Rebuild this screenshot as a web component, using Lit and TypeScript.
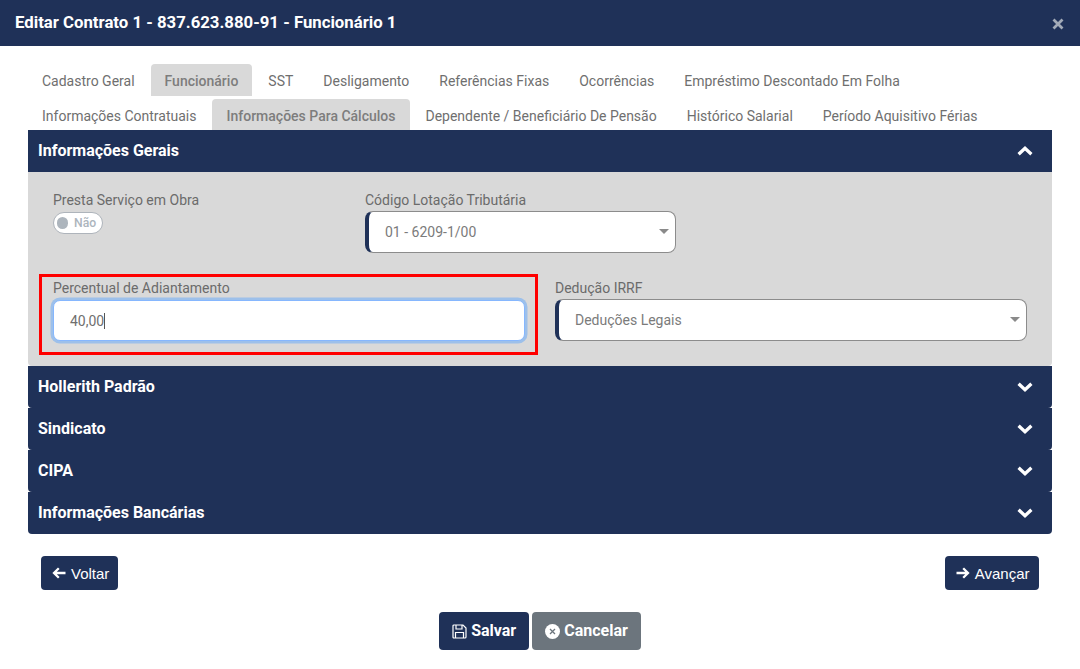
import { LitElement, html, css } from "lit";
import { customElement } from "lit/decorators.js";

const chevron = (up: boolean) => html`<svg class="chev" width="16" height="12" viewBox="0 0 16 12"><path d=${up ? "M1.6 9.2 L8 3.2 L14.4 9.2" : "M1.6 2.8 L8 8.8 L14.4 2.8"} fill="none" stroke="#fff" stroke-width="3.3"/></svg>`;

@customElement("app-root")
export class AppRoot extends LitElement {
  static styles = css`
    :host { display: block; width: 1080px; height: 669px; background: #fff; overflow: hidden; font-family: Roboto, "Liberation Sans", sans-serif; color: #6c757d; }
    * { box-sizing: border-box; }
    .modal-head { height: 46px; background: #1f3158; color: #fff; display: flex; align-items: center; justify-content: space-between; padding: 0 16px 2px 15px; font-size: 16.75px; font-weight: 700; }
    .close { display: flex; margin-top: 3px; }
    .body { padding: 18px 28px 0; }
    .tabs { display: flex; height: 32px; align-items: stretch; }
    .tabs.second { height: 31px; margin-top: 3px; }
    .tab { padding: 2px 14px 0; margin-right: 2px; font-size: 14px; color: #6f6f6f; display: flex; align-items: center; white-space: nowrap; border-radius: 4px 4px 0 0; }
    .tab.active { background: #d9d9d9; font-weight: 500; color: #7d7d7d; }
    .tabs.second .tab.active { margin: 0 1px 0 -1px; padding: 2px 15px 0; }
    .acc-h { height: 42px; background: #1f3158; color: #fff; font-size: 16px; font-weight: 700; display: flex; align-items: center; justify-content: space-between; padding: 0 19px 1px 10px; border-radius: 0 0 4px 4px; }
    .acc-h.first { border-radius: 0; }
    .chev { display: block; }
    .acc-b { height: 194px; background: #d9d9d9; padding: 19px 25px 0 12px; border-radius: 0 0 4px 4px; }
    .row { display: flex; }
    .row.one { height: 61px; padding-left: 13px; }
    .row.two { margin-top: 22px; }
    .f1 { width: 312px; }
    .f2 { width: 311px; }
    label { display: block; font-size: 14px; line-height: 19px; color: #6b6b6b; white-space: nowrap; }
    .toggle { width: 50px; height: 22px; border: 1px solid #aeb4bb; border-radius: 11px; background: #fff; display: flex; align-items: center; padding-left: 1.5px; gap: 6px; font-size: 12.2px; font-weight: 500; color: #adb5bd; margin-top: 2px; }
    .toggle i { width: 11.5px; height: 11.5px; margin-left: 1px; border-radius: 50%; background: #adb5bd; display: block; }
    .select { height: 42px; background: #fff; border: 1px solid #8c8c8c; border-left: 4px solid #1f3158; border-radius: 8px; display: flex; align-items: center; justify-content: space-between; padding: 0 6px 0 16px; font-size: 14px; color: #7b7b7b; margin-top: 1px; }
    .arrow { width: 0; height: 0; margin-top: -1px; border-left: 5.5px solid transparent; border-right: 5.5px solid transparent; border-top: 5.5px solid #8a8a8a; }
    .box { width: 499px; height: 81px; margin-left: -1px; border: 3px solid #f00; padding: 2px 10px 0 11px; }
    .input { height: 41px; margin-top: 2px; background: #fff; border: 1px solid #86b7fe; box-shadow: 0 0 0 2.5px #9dc0ea; border-radius: 7px; display: flex; align-items: center; padding-left: 16px; font-size: 14px; color: #6f6f6f; }
    .caret { width: 1px; height: 16px; background: #555; display: block; }
    .f3 { width: 472px; margin-left: 17px; margin-top: 5px; }
    .pager { display: flex; justify-content: space-between; padding: 22px 13px 0; }
    button { font-family: inherit; border: 0; background: #1f3158; color: #fff; border-radius: 4px; display: flex; align-items: center; margin: 0; }
    .nav { height: 34px; font-family: "Liberation Sans", Arial, sans-serif; font-size: 15px; padding: 0 8.5px 0 11px; gap: 5px; }
    .nav.fwd { padding-right: 9.5px; }
    .actions { display: flex; justify-content: center; gap: 3px; padding-top: 22px; }
    .act { height: 38px; font-size: 16px; font-weight: 700; gap: 4px; padding: 0 13px 2px; }
    .act.sec { background: #6c757d; }
    .act svg { margin-top: 3px; }
  `;
  render() {
    return html`
      <div class="modal-head">
        <span>Editar Contrato 1 - 837.623.880-91 - Funcionário 1</span>
        <span class="close"><svg width="12" height="12" viewBox="0 0 12 12"><path d="M1.5 1.5 L10.5 10.5 M10.5 1.5 L1.5 10.5" stroke="#a3abb8" stroke-width="2.8"/></svg></span>
      </div>
      <div class="body">
        <div class="tabs">
          ${["Cadastro Geral", "Funcionário", "SST", "Desligamento", "Referências Fixas", "Ocorrências", "Empréstimo Descontado Em Folha"].map((t) => html`<div class="tab ${t === "Funcionário" ? "active" : ""}">${t}</div>`)}
        </div>
        <div class="tabs second">
          ${["Informações Contratuais", "Informações Para Cálculos", "Dependente / Beneficiário De Pensão", "Histórico Salarial", "Período Aquisitivo Férias"].map((t) => html`<div class="tab ${t === "Informações Para Cálculos" ? "active" : ""}">${t}</div>`)}
        </div>
        <div class="acc-h first"><span>Informações Gerais</span>${chevron(true)}</div>
        <div class="acc-b">
          <div class="row one">
            <div class="f1">
              <label>Presta Serviço em Obra</label>
              <div class="toggle"><i></i><span>Não</span></div>
            </div>
            <div class="f2">
              <label>Código Lotação Tributária</label>
              <div class="select"><span>01 - 6209-1/00</span><span class="arrow"></span></div>
            </div>
          </div>
          <div class="row two">
            <div class="box">
              <label>Percentual de Adiantamento</label>
              <div class="input"><span>40,00</span><span class="caret"></span></div>
            </div>
            <div class="f3">
              <label>Dedução IRRF</label>
              <div class="select"><span>Deduções Legais</span><span class="arrow"></span></div>
            </div>
          </div>
        </div>
        <div class="acc-h"><span>Hollerith Padrão</span>${chevron(false)}</div>
        <div class="acc-h"><span>Sindicato</span>${chevron(false)}</div>
        <div class="acc-h"><span>CIPA</span>${chevron(false)}</div>
        <div class="acc-h"><span>Informações Bancárias</span>${chevron(false)}</div>
        <div class="pager">
          <button class="nav"><svg width="14" height="12" viewBox="0 0 14 12"><path d="M13.5 6 H2.5 M6.8 1.2 L2 6 L6.8 10.8" fill="none" stroke="#fff" stroke-width="2.3"/></svg>Voltar</button>
          <button class="nav fwd"><svg width="14" height="12" viewBox="0 0 14 12"><path d="M0.5 6 H11.5 M7.2 1.2 L12 6 L7.2 10.8" fill="none" stroke="#fff" stroke-width="2.3"/></svg>Avançar</button>
        </div>
        <div class="actions">
          <button class="act"><svg width="15" height="15" viewBox="0 0 15 15"><path d="M1 2 Q1 1 2 1 H11 L14 4 V13 Q14 14 13 14 H2 Q1 14 1 13 Z M4 1 V5 H10 V1 M3.5 14 V8.5 H11.5 V14" fill="none" stroke="#fff" stroke-width="1.2"/></svg>Salvar</button>
          <button class="act sec"><svg width="15" height="15" viewBox="0 0 15 15"><circle cx="7.5" cy="7.5" r="7.5" fill="#fff"/><path d="M5 5 L10 10 M10 5 L5 10" stroke="#6c757d" stroke-width="1.3"/></svg>Cancelar</button>
        </div>
      </div>
    `;
  }
}
